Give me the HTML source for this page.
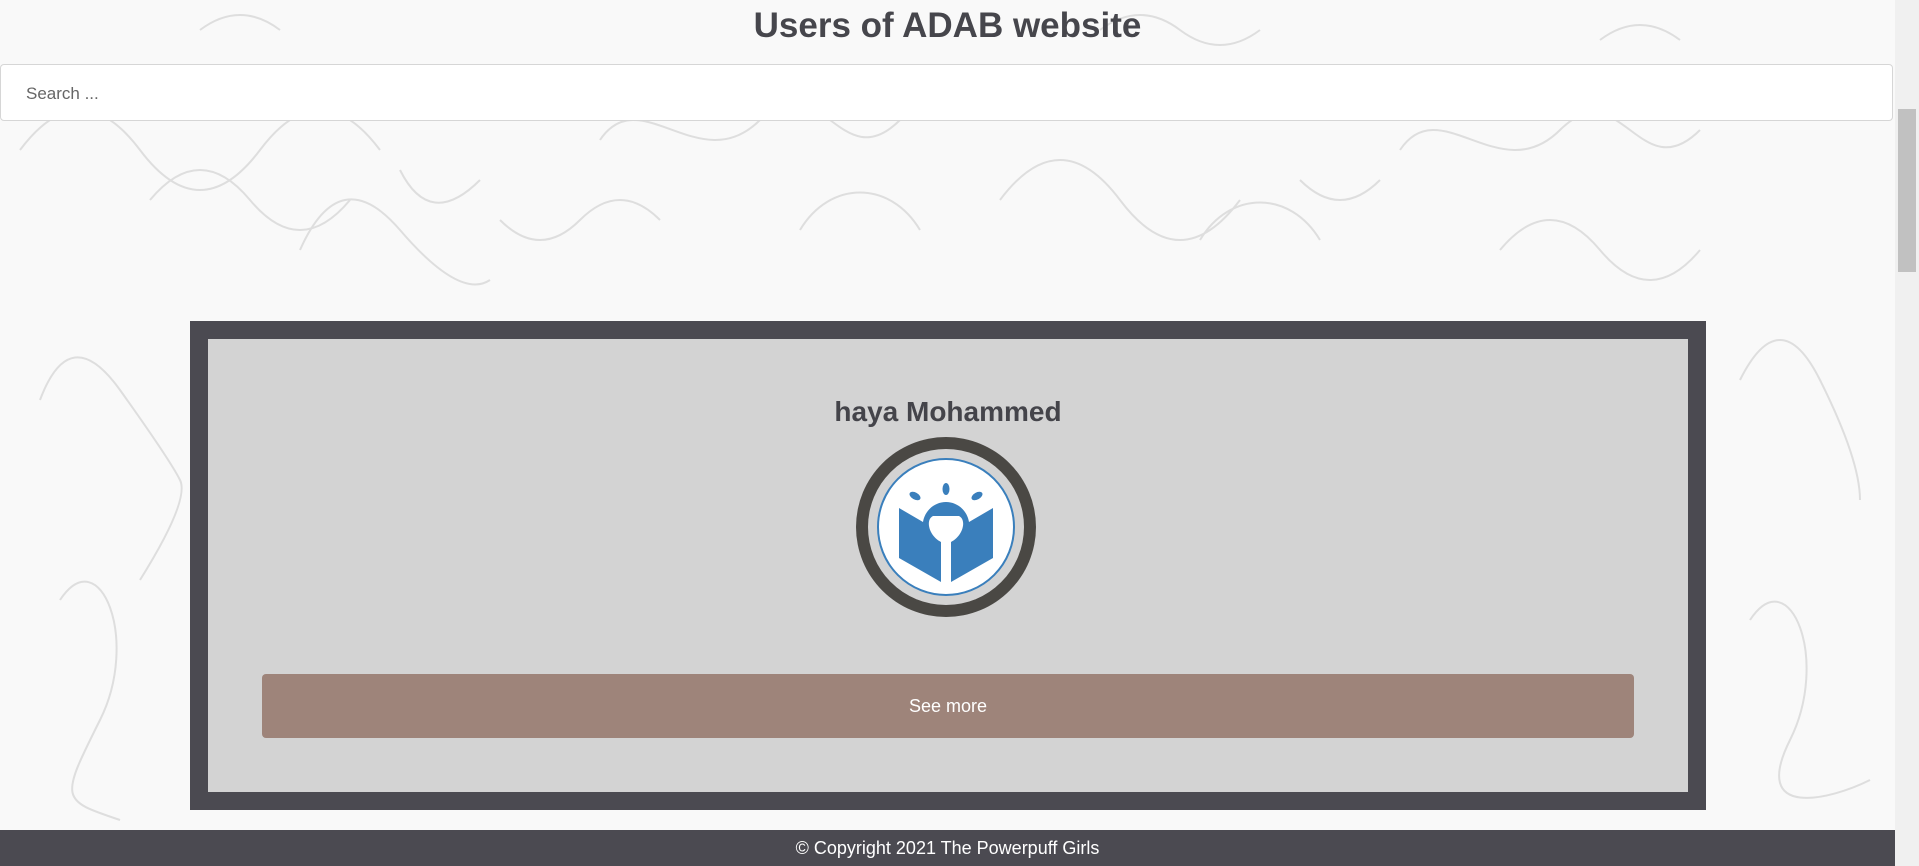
<!DOCTYPE html>
<html><head><meta charset="utf-8"><style>
html,body{margin:0;padding:0;width:1919px;height:866px;overflow:hidden;font-family:"Liberation Sans",sans-serif;}
body{background:#f9f9f9;position:relative;}
.bg{position:absolute;left:0;top:0;width:1895px;height:866px;}
h1{position:absolute;top:3px;left:0;width:1895px;margin:0;text-align:center;font-size:35px;font-weight:bold;color:#46464c;line-height:46px;}
.search{position:absolute;left:0;top:64px;width:1893px;height:57px;background:#fff;border:1px solid #d6d6d6;border-radius:4px;box-sizing:border-box;}
.search span{position:absolute;left:25px;top:19px;font-size:17px;color:#666;}
.card{position:absolute;left:190px;top:321px;width:1516px;height:489px;background:#4b4a51;}
.inner{position:absolute;left:18px;top:18px;right:18px;bottom:18px;background:#d3d3d3;}
.name{position:absolute;left:0;right:0;top:57px;text-align:center;font-size:28px;font-weight:bold;color:#44444a;}
.ring{position:absolute;left:648px;top:98px;width:180px;height:180px;border-radius:50%;background:#4a4844;}
.ring2{position:absolute;left:12px;top:12px;width:156px;height:156px;border-radius:50%;background:#d3d3d3;}
.ring3{position:absolute;left:9px;top:9px;width:134px;height:134px;border-radius:50%;background:#fff;border:2px solid #3a7fbc;}
.btn{position:absolute;left:54px;top:335px;width:1372px;height:64px;background:#9e847a;border-radius:4px;color:#fff;font-size:18px;text-align:center;line-height:64px;}
.foot{position:absolute;left:0;top:830px;width:1895px;height:36px;background:#4b4a51;color:#fff;text-align:center;font-size:18px;line-height:36px;}
.sb{position:absolute;left:1895px;top:0;width:24px;height:866px;background:#f0f0f0;}
.th{position:absolute;left:3px;top:109px;width:18px;height:163px;background:#c1c1c1;}
</style></head><body>
<svg class="bg" viewBox="0 0 1895 866" fill="none" stroke="#dedede" stroke-width="2">
<path d="M20 150 q60 -80 120 0 t120 0 t120 0"/><path d="M300 250 q40 -90 100 -20 t90 50"/><path d="M600 140 c40 -60 100 40 160 -20 s80 60 140 0"/><path d="M1000 200 q60 -80 120 0 t120 0"/><path d="M1400 150 c40 -60 100 40 160 -20 s80 60 140 0"/><path d="M40 400 q30 -80 80 -10 t60 90 t-40 100"/><path d="M60 600 c40 -60 80 40 40 120 s-40 80 20 100"/><path d="M1740 380 q40 -80 80 0 t40 120"/><path d="M1750 620 c40 -60 80 40 40 120 s40 60 80 40"/><path d="M200 30 q40 -30 80 0"/><path d="M1100 30 q40 -30 80 0 t80 0"/><path d="M1600 40 q40 -30 80 0"/><path d="M400 170 q30 60 80 10"/><path d="M1200 240 c30 -50 90 -50 120 0"/><path d="M800 230 c30 -50 90 -50 120 0"/>
<path d="M150 200 q50 -60 100 0 t100 0"/><path d="M1500 250 q50 -60 100 0 t100 0"/><path d="M1300 180 q40 40 80 0"/><path d="M500 220 q40 40 80 0 t80 0"/>
</svg>
<h1>Users of ADAB website</h1>
<div class="search"><span>Search ...</span></div>
<div class="card"><div class="inner">
<div class="name">haya Mohammed</div>
<div class="ring"><div class="ring2"><div class="ring3">
<svg width="134" height="134" viewBox="0 0 134 134">
<g fill="#3a7fbc">
<ellipse cx="67" cy="29" rx="3.5" ry="6"/>
<ellipse cx="36" cy="36" rx="6" ry="3.5" transform="rotate(30 36 36)"/>
<ellipse cx="98" cy="36" rx="6" ry="3.5" transform="rotate(-30 98 36)"/>
<path d="M20 48 L44 62 C46 50 56 42 67 42 C78 42 88 50 90 62 L114 48 L114 98 L72 122 L72 82 C84 76 88 60 80 56 L54 56 C46 60 50 76 62 82 L62 122 L20 98 Z"/>
</g></svg>
</div></div></div>
<div class="btn">See more</div>
</div></div>
<div class="foot">© Copyright 2021 The Powerpuff Girls</div>
<div class="sb"><div class="th"></div></div>
</body></html>
